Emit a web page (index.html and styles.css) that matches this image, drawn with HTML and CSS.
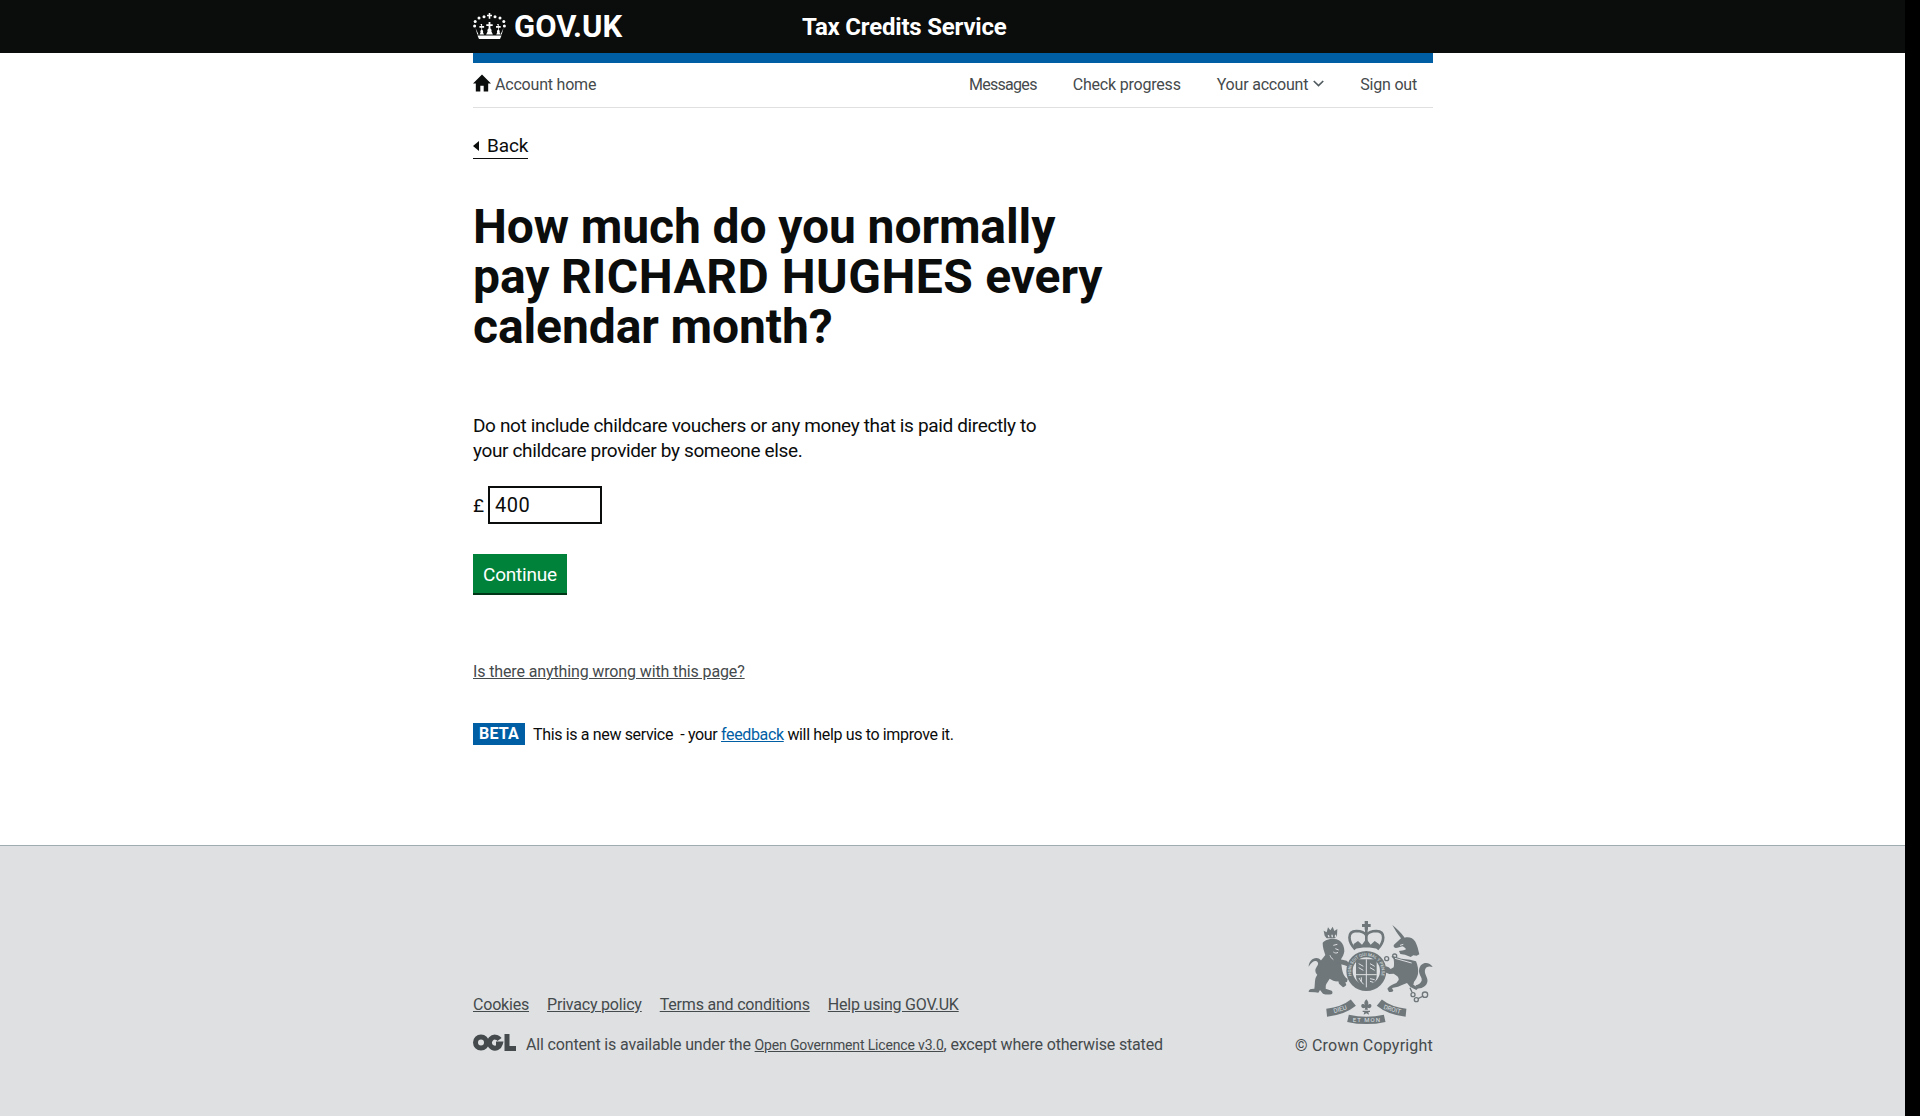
FILE: index.html
```html
<!DOCTYPE html>
<html lang="en">
<head>
    <meta charset="UTF-8">
    <meta name="viewport" content="width=device-width, initial-scale=1.0">
    <title>How much do you normally pay - Tax Credits Service</title>
    <link rel="stylesheet" href="styles.css">
</head>
<body>
    <div class="page">
        <header class="site-header">
            <div class="wrapper header-inner">
                <a href="#" class="logo">
                    <svg class="crown" viewBox="0 0 33 26" aria-hidden="true">
                        <g fill="#fff">
                            <path d="M15.700 0h1.600v1.700H19v1.600h-1.700v2.500h-1.600V3.300H14V1.700h1.700z"/>
                            <circle cx="11" cy="3.800" r="1.500"/><circle cx="22" cy="3.800" r="1.500"/>
                            <circle cx="6" cy="5" r="1.500"/><circle cx="27" cy="5" r="1.500"/>
                            <circle cx="2.200" cy="8.500" r="1.500"/><circle cx="30.800" cy="8.500" r="1.500"/>
                            <circle cx="1.600" cy="13" r="1.500"/><circle cx="31.400" cy="13" r="1.500"/>
                            <path d="M15.600 9h1.800v2.200h2.300V13h-2.300v2.500c1 .5 1.500 1.500 1 3l1.500 3h-6.800l1.500-3c-.5-1.500 0-2.500 1-3V13h-2.300v-1.800h2.300z"/>
                            <path d="M7.400 11h1.700v2h2v1.700h-2v2c1 .6 1.300 1.600.9 2.700l1 2.100H6.600l1-2.100c-.5-1.100-.2-2.100.8-2.700v-2h-2V13h2z"/>
                            <path d="M24 11h1.700v2h2v1.700h-2v2c1 .6 1.300 1.600.9 2.700l1 2.100h-4.400l1-2.100c-.5-1.100-.2-2.100.8-2.700v-2h-2V13h2z"/>
                            <path d="M2.500 15l3 6.500H4.300zM30.500 15l-3 6.500h1.200z"/>
                            <path d="M4.500 22.500h24l-1.500 3.500H6z"/>
                        </g>
                    </svg>
                    <span>GOV.UK</span>
                </a>
                <a href="#" class="service-name">Tax Credits Service</a>
            </div>
        </header>

        <div class="wrapper">
            <div class="blue-bar"></div>
            <nav class="account-nav">
                <a href="#" class="account-home">
                    <svg class="home-icon" viewBox="0 0 16 16" aria-hidden="true">
                        <path fill="#0b0c0c" d="M8 0.5L0 8.500h2.500V15.500h4V10.500h3v5h4V8.500H16z"/>
                    </svg>
                    Account home
                </a>
                <div class="nav-links">
                    <a href="#" class="messages-link">Messages</a>
                    <a href="#">Check progress</a>
                    <a href="#" class="dropdown">Your account<svg class="chevron" viewBox="0 0 10 6" aria-hidden="true"><path fill="none" stroke="#505a5f" stroke-width="1.500" d="M.7.700L5 5l4.300-4.300"/></svg></a>
                    <a href="#">Sign out</a>
                </div>
            </nav>

            <main class="content">
                <a href="#" class="back-link">Back</a>

                <h1>How much do you normally pay <span class="claimant">RICHARD HUGHES</span> every calendar month?</h1>

                <p class="hint">Do not include childcare vouchers or any money that is paid directly to your childcare provider by someone else.</p>

                <div class="amount-group">
                    <label for="amount">£</label>
                    <input type="text" id="amount" name="amount" value="400">
                </div>

                <button type="submit" class="continue-button">Continue</button>

                <a href="#" class="report-link">Is there anything wrong with this page?</a>

                <p class="beta-banner">
                    <strong class="beta-tag">BETA</strong>
                    <span>This is a new service &nbsp;- your <a href="#">feedback</a> will help us to improve it.</span>
                </p>
            </main>
        </div>

        <footer class="site-footer">
            <div class="wrapper footer-inner">
                <div class="footer-meta">
                    <ul class="footer-links">
                        <li><a href="#">Cookies</a></li>
                        <li><a href="#">Privacy policy</a></li>
                        <li><a href="#">Terms and conditions</a></li>
                        <li><a href="#">Help using GOV.UK</a></li>
                    </ul>
                    <div class="licence">
                        <svg class="ogl" viewBox="0 0 43 17" aria-hidden="true">
                            <g fill="none" stroke="#454a4c" stroke-width="5">
                                <circle cx="8" cy="8.500" r="5.500"/>
                                <path d="M26.500 5.500a5.500 5.500 0 1 0 .8 4.500h-4.300"/>
                                <path d="M34 0v14.500h9"/>
                            </g>
                        </svg>
                        <span>All content is available under the <a href="#" class="licence-link">Open Government Licence v3.0</a>, except where otherwise stated</span>
                    </div>
                </div>
                <div class="copyright">
                    <!-- royal arms, coords are 3x px from the top left of the crest -->
                    <svg class="crest" viewBox="30 15 375 315" aria-hidden="true">
                        <g fill="#6f777b">
                            <!-- centre crown -->
                            <path d="M200 15h10v9h8v9h-8v8h-10v-8h-8v-9h8z"/>
                            <path d="M201 38h8v50h-8z"/>
                            <path fill="none" stroke="#6f777b" stroke-width="8" d="M172 100C150 78 146 46 175 45c14 0 25 5 30 13 5-8 16-13 30-13 29 1 25 33 3 55"/>
                            <path d="M167 84l13-9 12 11 13-18 13 18 12-11 13 9v16c-24-7-52-7-76 0z"/>
                            <!-- garter ring -->
                            <path fill-rule="evenodd" d="M205 105a60 60 0 1 1 0 120 60 60 0 0 1 0-120zm0 19a41 41 0 1 0 0 82 41 41 0 0 0 0-82z"/>
                            <!-- shield -->
                            <path d="M174 130h62v50c0 18-16 28-31 34-15-6-31-16-31-34z"/>
                            <!-- lion crown -->
                            <path fill-rule="evenodd" d="M77 44l9 5 4-15 7 9 7-11 5 13 9-6-1 20-6 8H86l-6-8zm12 14l2 6h4l-2-7zm11-2l1 8h4l-1-8zm11 0l-1 8h4l1-8z"/>
                            <!-- lion -->
                            <path d="M84 73c12-6 30-7 42 2 9 7 13 19 13 31-1 10-6 17-10 24 1 14 2 27 5 38 3 10 7 16 15 21l-2 9-5 1 3 8c-3 3-7 6-10 7l-12-11-2-7c-10 1-18-3-26-8l-10 16c-3 5-1 9-2 14l18 6c3 2 3 7 1 10-9 3-19 2-27-1l-9-11-5 8-10-1-19-1c0-5 3-8 8-9l9-1c2-10 1-21 3-29 1-6 6-12 9-17-4-10-4-21 2-31 6-9 13-15 19-24-4-11-8-23-8-35 0-3 5-6 10-9z"/>
                            <!-- lion paw on the ring -->
                            <path d="M120 128l26 6 10 10-4 8-12-4-22-6z"/>
                            <!-- lion tail -->
                            <path d="M64 180c-6-3-12-8-12-16 0-10 10-15 8-23-2-7-11-7-16-3-5 3-8 9-12 14 0-13 10-26 23-26 11 0 18 9 17 20-1 8-8 14-9 21 1 4 4 7 6 9z"/>
                            <!-- unicorn head and horn -->
                            <path d="M283 27c13 10 26 23 37 38 13-3 25 1 32 12 6 11 9 25 12 38l-8 4-10-1-8 5-17-7-14-2-4-9c6 0 15-1 21-5-2-4-6-8-11-9-6 1-13 5-20 5-5-1-8-6-5-10 7-6 14-13 21-19-10-13-19-27-26-40z"/>
                            <!-- unicorn body -->
                            <path d="M287 121l23 7 26 3 18 5c5 12 8 25 6 38-2 10-7 18-12 24l-2 8 10 6 3 6-4 4-6-3-12-6-10-12-15 6-12 5-18 4 4 8c-3 4-8 5-13 4l-5-10c6-8 17-13 27-17l7-9c1-5-2-9-5-12l-10-7-13 1-13-5-5-6 8-12 8 3 6 5 9-5c2-8 1-16 0-24-2-5-5-9-9-9z"/>
                            <!-- unicorn tail -->
                            <path d="M353 208c8-2 16-7 18-14 2-8-5-14-7-22-3-13 2-26 14-30 10-3 20 2 26 11-6-2-13-3-18 1-7 6-6 15-3 22 3 8 8 15 4 25-4 12-18 17-30 17z"/>
                            <!-- fleur -->
                            <path d="M205 250c6 6 8 13 4 18 3-4 9-6 11-1 2 6-4 11-9 9l-3-1 2 6h-10l2-6-3 1c-5 2-11-3-9-9 2-5 8-3 11 1-4-5-2-12 4-18zM194 284h22v4h-5l2 8-8-4-8 4 2-8h-5z"/>
                        </g>
                        <!-- motto scrolls -->
                        <g fill="none" stroke="#6f777b" stroke-width="24">
                            <path d="M86 290c30-3 58-12 80-30"/>
                            <path d="M244 260c22 18 50 27 80 30"/>
                            <path stroke-width="22" d="M150 307c35 8 75 8 110 0"/>
                        </g>
                        <!-- chain and collar links -->
                        <g fill="none" stroke="#6f777b" stroke-width="4">
                            <circle cx="345" cy="236" r="6"/><circle cx="355" cy="251" r="6"/>
                            <circle cx="381" cy="236" r="8"/><path d="M336 215l6 14M360 248l16-8"/>
                            <circle cx="290" cy="120" r="6"/><circle cx="266" cy="128" r="6"/>
                        </g>
                        <!-- light details -->
                        <g fill="none" stroke="#dee0e2" stroke-width="3">
                            <path d="M205 130v84M174 176h62"/>
                            <path d="M182 143l14 8M182 155l14 8M216 143l14 8M216 155l14 8M216 188l14 3M216 196l10 3"/>
                            <path d="M183 186c4 8 9 14 14 19M190 184v14"/>
                            <path d="M106 88l12-3M112 98l10 4M106 108c5 4 10 4 14 1M96 118c2 6 6 10 10 13"/>
                            <path d="M306 88l10-3M291 127l50 14"/>
                        </g>
                        <g fill="#dee0e2" font-family="'Liberation Sans', sans-serif" font-size="19" text-anchor="middle">
                            <path id="garter-arc" fill="none" d="M172.500 198.500a46 46 0 1 1 65 0"/>
                            <text font-size="13"><textPath href="#garter-arc" startOffset="50%">HONI SOIT QUI MAL Y PENSE</textPath></text>
                            <text transform="translate(128 286) rotate(-17)">DIEU</text>
                            <text x="205" y="319" font-size="18" textLength="82">ET MON</text>
                            <text transform="translate(281 286) rotate(17)">DROIT</text>
                        </g>
                    </svg>
                    <span class="crown-copyright">© Crown Copyright</span>
                </div>
            </div>
        </footer>
    </div>
</body>
</html>
```

FILE: styles.css
```css
:root {
    --black: #0b0c0c;
    --blue: #005ea5;
    --grey-text: #454a4c;
    --footer-bg: #dee0e2;
    --green: #00823b;
}

* {
    margin: 0;
    padding: 0;
    box-sizing: border-box;
    font-family: Roboto, Arial, sans-serif;
}

body {
    background: #000;
    min-height: 100vh;
}

a {
    color: inherit;
}

.page {
    width: 1905px;
    min-height: 1116px;
    background: white;
    display: flex;
    flex-direction: column;
}

.wrapper {
    width: 960px;
    margin-left: 473px;
}

.site-header {
    background: var(--black);
    height: 53px;
    color: white;
}

.header-inner {
    display: flex;
    align-items: center;
    height: 100%;
}

.logo {
    display: flex;
    align-items: center;
    gap: 8px;
    width: 329px;
    color: white;
    text-decoration: none;
    font-size: 31px;
    font-weight: 700;
}

.crown {
    width: 33px;
    height: 26px;
    margin-bottom: 2px;
}

.service-name {
    color: white;
    text-decoration: none;
    font-size: 24px;
    font-weight: 700;
    letter-spacing: -0.2px;
}

.blue-bar {
    height: 10px;
    background: var(--blue);
}

.account-nav {
    display: flex;
    justify-content: space-between;
    align-items: center;
    height: 45px;
    border-bottom: 1px solid #dee0e2;
    font-size: 16px;
    letter-spacing: -0.2px;
    color: var(--grey-text);
    padding-bottom: 1px;
}

.account-nav a {
    text-decoration: none;
}

.account-home {
    display: flex;
    align-items: center;
    gap: 4px;
}

.home-icon {
    width: 18px;
    height: 18px;
    margin-bottom: 4px;
}

.nav-links {
    display: flex;
    gap: 36px;
    padding-right: 16px;
}

.messages-link {
    letter-spacing: -0.7px;
}

.chevron {
    width: 11px;
    height: 7px;
    margin-left: 5px;
    vertical-align: 3px;
}

.content {
    padding-top: 25px;
    height: 737px;
    display: flex;
    flex-direction: column;
    align-items: flex-start;
}

.back-link {
    font-size: 19px;
    line-height: 24px;
    padding-top: 1px;
    letter-spacing: -0.1px;
    color: var(--black);
    text-decoration: none;
    border-bottom: 1px solid var(--black);
    padding-left: 14px;
    position: relative;
}

.back-link::before {
    content: '';
    position: absolute;
    left: 0;
    top: 8px;
    border-style: solid;
    border-width: 5px 6px 5px 0;
    border-color: transparent var(--black) transparent transparent;
}

h1 {
    width: 640px;
    margin-top: 43px;
    font-size: 48px;
    line-height: 50px;
    font-weight: 700;
    letter-spacing: -0.1px;
    color: var(--black);
}

.claimant {
    letter-spacing: 0.5px;
}

.hint {
    width: 580px;
    margin-top: 61px;
    font-size: 19px;
    line-height: 25px;
    letter-spacing: -0.36px;
    color: var(--black);
}

.amount-group {
    display: flex;
    align-items: center;
    gap: 4px;
    margin-top: 23px;
    font-size: 19px;
    color: var(--black);
}

.amount-group input {
    width: 114px;
    height: 38px;
    border: 2px solid var(--black);
    padding: 0 5px;
    font-size: 20px;
    letter-spacing: 0.5px;
    color: var(--black);
    outline: none;
}

.continue-button {
    margin-top: 30px;
    height: 41px;
    width: 94px;
    padding-top: 2px;
    background: var(--green);
    color: white;
    border: none;
    border-bottom: 2px solid #003618;
    font-size: 19px;
    letter-spacing: -0.2px;
    cursor: pointer;
}

.report-link {
    margin-top: 67px;
    font-size: 16px;
    line-height: 20px;
    letter-spacing: -0.13px;
    color: var(--grey-text);
}

.beta-banner {
    display: flex;
    align-items: center;
    gap: 8px;
    margin-top: 41px;
    font-size: 16px;
    letter-spacing: -0.35px;
    color: var(--black);
}

.beta-banner a {
    color: var(--blue);
}

.beta-tag {
    background: var(--blue);
    color: white;
    padding: 0 6px;
    height: 22px;
    line-height: 22px;
    font-size: 16px;
    font-weight: 700;
    letter-spacing: 0.2px;
}

.site-footer {
    flex: 1;
    background: var(--footer-bg);
    border-top: 1px solid #a1acb2;
    color: var(--grey-text);
}

.footer-inner {
    display: flex;
    justify-content: space-between;
    align-items: flex-end;
    padding-top: 75px;
    font-size: 16px;
}

.footer-links {
    display: flex;
    gap: 18px;
    list-style: none;
    margin-bottom: 20px;
    letter-spacing: -0.2px;
}

.licence {
    display: flex;
    align-items: center;
    gap: 10px;
    letter-spacing: -0.16px;
}

.licence-link {
    font-size: 14px;
}

.ogl {
    width: 43px;
    height: 17px;
    margin-bottom: 4px;
}

.copyright {
    display: flex;
    flex-direction: column;
    align-items: flex-end;
    gap: 10px;
}

.crown-copyright {
    letter-spacing: 0.2px;
}

.crest {
    width: 125px;
    height: 105px;
}
```
